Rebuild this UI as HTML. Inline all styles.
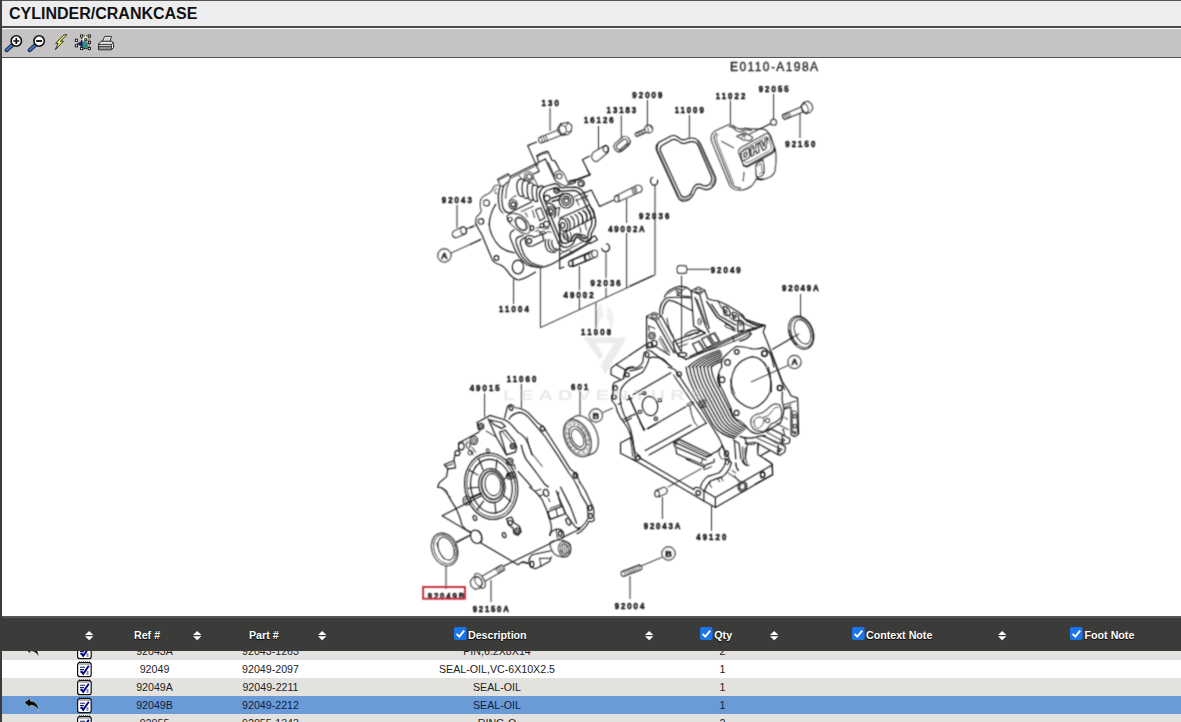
<!DOCTYPE html>
<html><head><meta charset="utf-8">
<style>
html,body{margin:0;padding:0;background:#fff;overflow:hidden}
body{width:1181px;height:722px;position:relative;font-family:"Liberation Sans",sans-serif}
#lb{position:absolute;left:0;top:0;width:2px;height:722px;background:#3b3b3b}
#hd{position:absolute;left:2px;top:0;width:1179px;height:28px;background:#ededed;border-top:1px solid #555;border-bottom:2px solid #4a4a4a;box-sizing:border-box}
#hd span{position:absolute;left:7px;top:4px;font-weight:bold;font-size:16px;color:#111;white-space:nowrap}
#tb{position:absolute;left:2px;top:29px;width:1179px;height:29px;background:#c5c3c4;border-bottom:1px solid #555;box-sizing:border-box}
#dg{position:absolute;left:0;top:0;width:1181px;height:722px;will-change:transform;opacity:0.999}
#th{position:absolute;left:2px;top:616px;width:1179px;height:35px;background:#3b3b39;border-top:2px solid #555;box-sizing:border-box}
.r{position:absolute;left:2px;width:1179px;height:18px}
.t{position:absolute;font-size:10.67px;color:#222;white-space:nowrap;transform:translateX(-50%);line-height:18px}
.h{position:absolute;font-size:10.67px;font-weight:bold;color:#fff;white-space:nowrap;top:627.8px;line-height:14px;text-shadow:0 1px 1px #000}
</style></head><body>
<svg width="0" height="0" style="position:absolute"><defs>
<g id="note"><rect x="0.6" y="1.6" width="13.6" height="14" rx="2.2" fill="#fff" stroke="#111" stroke-width="1.2"/>
<path d="M2 1.2h11" stroke="#111" stroke-width="1.4" stroke-dasharray="1.1 0.9"/>
<path d="M2 3.2h11" stroke="#777" stroke-width="0.8"/>
<path d="M3 6.2h5M3 8.6h4M3 11h2.5M9.5 11h2M9.5 13h2" stroke="#1a1a6a" stroke-width="1.1"/>
<path d="M4.2 10.2l2 2.6l5.6-8" stroke="#00008b" stroke-width="1.9" fill="none"/></g>
<g id="arr"><path d="M0.3 4.6L6.4 0.2L6.2 3.1C10.5 3.2 14.6 6 14.6 13.2C13.2 9 10.5 7.4 6.1 7.3L6.4 9.6Z" fill="#0a0a0a" stroke="rgba(255,255,255,.45)" stroke-width="0.8"/></g>
<g id="sort"><path d="M0 3.9L4.2 0L8.4 3.9ZM0 5.3L4.2 9.2L8.4 5.3Z" fill="#fff"/></g>
<g id="chk"><rect x="0" y="0" width="12.6" height="13" rx="2" fill="#1b74e8"/><path d="M2.6 6.8l2.7 2.8l4.9-6" stroke="#fff" stroke-width="1.9" fill="none"/></g>
</defs></svg>
<div id="lb"></div>
<div id="hd"><span>CYLINDER/CRANKCASE</span></div>
<div id="tb"></div>
<svg style="position:absolute;left:0;top:28px" width="130" height="30" viewBox="0 28 130 30">
<!-- zoom in -->
<path d="M12.2 45.2L6.6 50.2" stroke="#1c2a44" stroke-width="4" stroke-linecap="round"/>
<path d="M12.2 45.2L6.8 50" stroke="#3f78cf" stroke-width="2" stroke-linecap="round"/>
<circle cx="16.3" cy="41" r="5.2" fill="#fff" stroke="#111" stroke-width="1.6"/>
<path d="M13.3 41h6M16.3 38v6" stroke="#111" stroke-width="1.7"/>
<!-- zoom out -->
<path d="M35 45.2L29.6 50.2" stroke="#1c2a44" stroke-width="4" stroke-linecap="round"/>
<path d="M35 45.2L29.8 50" stroke="#3f78cf" stroke-width="2" stroke-linecap="round"/>
<circle cx="39.1" cy="41" r="5.2" fill="#fff" stroke="#111" stroke-width="1.6"/>
<path d="M36.2 41h5.8" stroke="#111" stroke-width="1.9"/>
<!-- lightning -->
<path d="M64 34.8L66.9 34.8L60.4 41.2L63.4 41.2L55.3 49.8L58.2 43.2L55.6 43.2Z" fill="#eef06a" stroke="#22221a" stroke-width="0.9" stroke-linejoin="round"/>
<!-- select -->
<circle cx="84.2" cy="45.4" r="3.9" fill="#2f8d86"/>
<circle cx="85.3" cy="38.4" r="2.6" fill="#f2f1b8"/>
<path d="M76.5 43.8L82.5 40.6L82.5 47Z" fill="#26265e"/>
<rect x="81.6" y="35.9" width="7.6" height="12.6" fill="none" stroke="#111" stroke-width="0.9" stroke-dasharray="1.2 1"/>
<g fill="#fff" stroke="#111" stroke-width="0.9"><rect x="80.6" y="34.9" width="2.2" height="2.2"/><rect x="88.2" y="34.9" width="2.2" height="2.2"/><rect x="80.6" y="47.4" width="2.2" height="2.2"/><rect x="88.2" y="47.4" width="2.2" height="2.2"/><rect x="75.3" y="39.2" width="2.2" height="2.2"/><rect x="75.3" y="44.7" width="2.2" height="2.2"/><rect x="88.4" y="41.2" width="2.2" height="2.2"/><rect x="84.8" y="38.8" width="2" height="2"/></g>
<!-- printer -->
<path d="M102.6 41.6L104.6 36.4L111.6 36.4L109.8 41.6Z" fill="#fff" stroke="#222" stroke-width="0.9"/>
<path d="M105 38.2h5M104.4 39.8h5" stroke="#999" stroke-width="0.7"/>
<path d="M98.6 44L101.2 41.2L111.6 41.2L113.6 43.6L113.6 47.4L111.4 49.8L98.6 49.8Z" fill="#e9e9e9" stroke="#222" stroke-width="1"/>
<path d="M98.6 44.4L111.4 44.4L113.4 42.4M98.8 46.4h12.4M98.8 48h12.4M111.4 44.4v5.2" stroke="#222" stroke-width="0.9" fill="none"/>
</svg>

<svg id="dg" viewBox="0 0 1181 722">
<defs><filter id="bl" x="0" y="0" width="1181" height="722" filterUnits="userSpaceOnUse"><feConvolveMatrix order="3" kernelMatrix="0.05 0.11 0.05 0.11 0.36 0.11 0.05 0.11 0.05" edgeMode="none" preserveAlpha="false"/></filter></defs>
<g filter="url(#bl)">
<!-- 05_watermark.svg -->
<g fill="#ececec" stroke="none">
<path d="M583.5 337.5 L626.5 337.5 L605.5 374.5 L600.5 366 L614 343 L596 343 L603 355 L600 360.5 Z"/>
<path d="M599 331 Q588 318 602 301.5 Q600 312 606 318 Q608 310 606.5 305 Q620 318 609 331 Q612 322 604 316 Q597 322 599 331Z" fill="#f0f0f0"/>
<text transform="translate(503 400.2) scale(1.4 1)" font-family="Liberation Sans" font-weight="bold" font-size="14.2" textLength="142.8" lengthAdjust="spacing" fill="#eaeaea">LEADVENTURE</text>
</g>

<!-- 20_cover.svg -->
<g transform="translate(640,110) scale(0.127443)" fill="none" stroke="#161616" stroke-width="9.03" stroke-linejoin="round" stroke-linecap="round">
<!-- gasket 11009 -->
<path d="M150 253 L243 204 Q268 194 292 210 L322 230 Q345 240 372 226 Q420 210 452 236 Q468 250 478 272 L590 522 Q606 565 566 606 Q530 636 492 618 Q462 600 442 618 Q428 640 420 662 Q396 712 344 716 Q312 712 298 684 L132 322 Q116 280 150 253Z"/>
<path d="M176 276 L252 234 Q272 226 290 238 L322 258 Q348 270 376 254 Q416 240 440 258 Q452 268 460 286 L560 520 Q570 556 544 584 Q520 602 496 592 Q462 574 436 588 Q416 604 408 636 Q392 676 348 686 Q328 684 318 664 L160 322 Q152 292 176 276Z"/>
<path d="M140 270 Q128 290 142 322 L304 676 Q318 702 346 704 Q386 698 404 660" stroke-width="6.10"/>
<path d="M452 246 L580 524 Q590 560 560 594" stroke-width="6.10"/>
<!-- valve cover 11022 -->
<path d="M590 164 L690 118 Q716 110 738 128 Q760 150 796 150 Q830 138 868 150 L960 150 Q996 156 1010 184 L1052 290 Q1070 330 1066 400 L1060 470 Q1052 512 1010 530 L960 546 Q930 548 912 540 Q902 566 880 590 Q840 624 790 628 Q730 630 704 590 L562 244 Q546 196 590 164Z" fill="#fff"/>
<path d="M600 182 Q572 206 586 244 L720 580 Q744 612 790 612" />
<path d="M612 190 Q590 214 604 248 L736 578" stroke-width="5.49"/>
<path d="M640 246 L734 296"/>
<path d="M700 130 Q730 128 752 160 Q770 176 800 168"/>
<path d="M800 168 Q830 150 872 162"/>
<!-- small plate on top -->
<path d="M758 206 L822 176 L884 214 Q880 236 850 240 L812 236Z"/>
<path d="M790 200 L830 190 M800 214 L836 196 M812 190 L826 224" stroke-width="5.49"/>
<!-- OHV plate -->
<path d="M772 332 Q770 306 800 290 L986 186 Q1012 176 1024 204 L1050 286 Q1056 316 1030 332 L852 432 Q820 446 806 420Z"/>
<path d="M790 336 Q790 318 812 306 L980 212 Q1002 204 1010 226 L1030 290 Q1034 308 1014 320 L850 410 Q826 420 816 400Z" stroke-width="5.49"/>
<path d="M806 420 Q812 450 846 446 L1040 340 Q1062 322 1058 300" />
<g transform="matrix(1,-0.53,0.1,1,800,404)" fill="#fff" stroke="#161616" stroke-width="9.76"><path d="M8 0H54Q62 0 62 -8V-66Q62 -74 54 -74H8Q0 -74 0 -66V-8Q0 0 8 0ZM21 -22V-52H41V-22Z"/><path d="M74 0V-74H94V-47H114V-74H134V0H114V-27H94V0Z"/><path d="M144 -74H164L176 -26L188 -74H208L187 0H165Z"/></g>
<!-- lower boss -->
<path d="M906 446 Q912 420 940 404 L966 392 L976 470 Q978 500 956 516 Q930 530 912 518Z"/>
<path d="M922 440 L950 420 L958 480 M934 500 Q950 486 972 490" stroke-width="5.49"/>
<path d="M912 518 Q920 544 960 540"/>
<path d="M816 490 L810 556"/>
<!-- oring 92055 and leader -->
<circle cx="1048" cy="97" r="23" fill="#fff"/>
<path d="M1024 108 L852 192"/>
<!-- ring 92036 -->
</g>

<!-- 30_headA.svg -->
<g transform="translate(470,150) scale(0.10248)" fill="none" stroke="#161616" stroke-width="10.98" stroke-linejoin="round" stroke-linecap="round">
<!-- flange / gasket face left -->
<path d="M272 345 Q240 340 226 372 Q214 410 170 432 Q112 452 102 500 Q96 560 112 596 Q96 630 66 652 Q50 680 56 730" fill="#fff"/>
<path d="M262 372 Q240 380 238 404 Q240 430 262 424" stroke-width="8.54"/>
<circle cx="160" cy="516" r="29"/>
<circle cx="106" cy="697" r="27"/>
<path d="M252 528 Q196 610 186 730"/>
<!-- left tab -->
<path d="M270 286 L372 232 L394 262 L382 300 Q350 320 330 350 L296 348Z" fill="#fff"/>
<path d="M276 298 L378 246" stroke-width="8.54"/>
<!-- big side arcs -->
<path d="M296 346 Q262 440 286 560 Q296 600 322 616"/>
<path d="M330 344 Q298 440 318 548 Q328 590 352 604"/>
<path d="M382 300 Q344 380 348 470" stroke-width="8.54"/>
<!-- long top edge -->
<path d="M392 258 L735 88"/>
<path d="M398 276 L668 140" stroke-width="8.54"/>
<!-- tower -->
<path d="M652 56 Q690 26 742 14 Q760 12 764 22 L800 100 L828 106 L878 198" />
<path d="M656 64 Q700 36 756 26" stroke-width="8.54"/>
<path d="M654 58 L668 110"/>
<path d="M735 88 L832 292"/>
<path d="M764 120 L822 250" stroke-width="8.54"/>
<path d="M480 250 L500 280 M610 250 L660 345" stroke-width="8.54"/>
<!-- bosses -->
<ellipse cx="575" cy="258" rx="42" ry="46" fill="#fff"/>
<circle cx="577" cy="260" r="24"/>
<path d="M832 222 Q850 196 886 204 Q910 214 924 250 L962 338 L930 352 Q870 330 836 300 Q818 262 832 222Z" fill="#fff"/>
<circle cx="872" cy="256" r="25"/>
<path d="M966 304 L1018 290 L1030 318 L978 336Z"/>
<circle cx="1086" cy="326" r="29"/>
<path d="M1076 318 Q1096 300 1104 328 Q1100 350 1086 356" stroke-width="8.54"/>
<path d="M1030 300 L1171 240" stroke-width="8.54"/>
<!-- spring coils left -->
<path d="M470 296 Q440 360 478 440 Q500 460 520 448"/>
<path d="M476 292 Q510 268 540 300"/>
<path d="M518 306 Q492 380 528 462 Q548 480 566 466"/>
<path d="M522 304 Q556 286 586 322"/>
<path d="M566 326 Q544 396 576 480 Q594 498 612 486"/>
<path d="M570 324 Q604 310 630 344"/>
<path d="M612 346 Q594 414 622 492 Q640 510 654 500"/>
<path d="M616 346 Q650 336 672 368"/>
<path d="M656 370 Q640 430 660 500"/>
<path d="M660 366 Q690 340 716 356"/>
<!-- hole lower-left on head -->
<ellipse cx="420" cy="530" rx="40" ry="44"/>
<circle cx="422" cy="532" r="23"/>
<path d="M384 496 Q410 456 452 444" stroke-width="8.54"/>
<path d="M356 604 L384 616 Q470 570 600 508"/>
<!-- rocker-cover seat (double outline) -->
<!-- center details -->
<circle cx="846" cy="396" r="27"/>
<circle cx="846" cy="396" r="12" stroke-width="8.54"/>
<circle cx="752" cy="472" r="29"/>
<circle cx="940" cy="496" r="70"/>
<circle cx="940" cy="496" r="44"/>
<circle cx="940" cy="496" r="24"/>
<path d="M790 470 L880 440 M800 500 L870 480 M880 440 L900 420" stroke-width="8.54"/>
<circle cx="790" cy="596" r="42"/>
<circle cx="790" cy="596" r="22"/>
<path d="M740 520 Q800 510 830 560 Q850 620 820 660"/>
<!-- port flange lower-left -->
<path d="M500 600 L620 548 M540 610 L560 650 M610 590 L630 660" stroke-width="8.54"/>
<!-- right spring coils -->
<!-- exhaust port flange -->
<path d="M362 648 Q376 616 420 618 L480 630 Q540 660 574 722 Q598 780 576 806 Q548 828 500 806 Q440 770 400 722 Q364 690 362 648Z" fill="#fff"/>
<ellipse cx="498" cy="722" rx="46" ry="76" transform="rotate(-38 498 722)"/>
<ellipse cx="498" cy="722" rx="37" ry="66" transform="rotate(-38 498 722)" stroke-width="7.32"/>
<circle cx="392" cy="676" r="20"/>
</g>

<!-- 31_headB.svg -->
<g transform="translate(470,224) scale(0.10248)" fill="none" stroke="#161616" stroke-width="10.98" stroke-linejoin="round" stroke-linecap="round">
<!-- flange outer -->
<path d="M58 0 Q80 50 112 96 L212 336 Q222 372 270 390 Q330 404 372 470 Q410 530 470 546 Q520 544 640 468"/>
<circle cx="258" cy="331" r="23"/>
<ellipse cx="468" cy="420" rx="55" ry="68"/>
<path d="M0 200 L105 150 M0 40 L40 20"/>
<!-- bore arc -->
<path d="M186 0 Q200 130 290 220 Q350 270 436 280"/>
<!-- head lower body -->
<path d="M430 58 L404 76 Q384 96 394 140 L440 252 Q470 330 556 398 Q620 430 700 424 Q780 410 870 352 L1000 282 L1171 180"/>
<path d="M520 110 L470 128 Q440 140 452 190 L486 280 Q520 350 590 396 Q640 420 690 424" />
<path d="M540 130 L510 148 Q484 160 494 206 L520 282 Q548 340 610 384 Q660 410 710 412"/>
<!-- boss -->
<path d="M540 150 Q540 116 576 112 Q610 112 624 130 L706 100 L720 160 L612 214 Q560 226 544 190Z"/>
<circle cx="578" cy="166" r="23"/>
<!-- port flange bottom -->
<circle cx="602" cy="40" r="22"/>
<path d="M640 70 Q670 50 690 80 Q710 110 740 90 Q760 60 790 80" stroke-width="8.54"/>
<path d="M650 40 L700 30 M720 50 L770 40" stroke-width="8.54"/>
<!-- seat lower -->
<!-- spring coils -->
<path d="M740 150 Q720 210 760 262 Q790 282 830 276"/>
<path d="M770 150 Q752 200 790 250 Q816 268 850 262"/>
<path d="M800 160 Q790 200 820 240 Q846 254 880 244"/>
<path d="M900 90 L920 150 M940 80 L960 150 M980 80 L990 130" stroke-width="8.54"/>
<path d="M880 250 Q920 290 960 250 L1000 282" stroke-width="8.54"/>
<!-- vertical assembly line -->
<path d="M875 0 L875 436 L916 420"/>
<!-- pin 49002 -->
<path d="M984 356 L1171 282 M1004 412 L1171 346"/>
<ellipse cx="984" cy="385" rx="22" ry="29"/>
<path d="M1004 358 Q990 384 1004 412" stroke-width="8.54"/>
<path d="M1120 304 Q1108 330 1128 362"/>
</g>

<!-- 32_headC.svg -->
<g transform="translate(560,170) scale(0.10248)" fill="none" stroke="#161616" stroke-width="10.98" stroke-linejoin="round" stroke-linecap="round">
<!-- pin 49002A -->
<path d="M548 251 L748 152 Q790 140 800 180 Q800 212 776 218 L572 308" fill="#fff"/>
<ellipse cx="553" cy="280" rx="22" ry="30" fill="#fff"/>
<path d="M574 252 Q560 280 574 306" stroke-width="8.54"/>
<path d="M700 176 L740 158 L752 214 L716 232Z" fill="#999" stroke="#555" stroke-width="6.10"/>
<!-- leader pin->head -->
<path d="M520 296 L386 356 L306 196 L232 226"/>
<!-- ring 92036 upper -->
<path d="M950.8 97.6 A34 40 0 1 1 906.4 70.4"/>
<!-- head right sliver -->
</g>
<g transform="translate(560,230) scale(0.10248)" fill="none" stroke="#161616" stroke-width="10.98" stroke-linejoin="round" stroke-linecap="round">
<!-- pin 49002 right end -->
<path d="M100 300 L322 200 M122 358 L350 264"/>
<ellipse cx="338" cy="232" rx="28" ry="34" fill="#fff"/>
<path d="M246 238 Q236 268 262 296 M282 222 Q272 252 298 282" stroke-width="8.54"/>
<!-- head bottom right -->
<path d="M0 278 L250 142 L270 96 L340 56 L366 96 L296 132 L268 100"/>
<path d="M0 236 L230 110" stroke-width="8.54"/>
<path d="M40 20 Q30 70 80 110 Q140 120 160 60 Q200 30 250 60" />
<path d="M60 0 Q60 60 100 84 Q130 84 140 40" stroke-width="8.54"/>
<path d="M180 60 L220 90 L260 70" stroke-width="8.54"/>
<!-- ring 92036 lower -->
<path d="M451.6 134.6 A38 38 0 1 1 407.6 178.6"/>
</g>

<!-- 33_headE.svg -->
<g transform="translate(540,170) scale(0.10248)" fill="none" stroke="#161616" stroke-width="10.98" stroke-linejoin="round" stroke-linecap="round">
<path d="M460 0 L492 46 L300 120"/>
<!-- seat right -->
<!-- rocker shaft lines -->
<path d="M330 262 L440 214 M350 300 L470 250 M352 280 L380 344 M420 240 L450 300" stroke-width="8.54"/>
<path d="M190 470 L480 344"/>
<path d="M250 606 L530 462"/>
<!-- retainer -->
<ellipse cx="226" cy="536" rx="42" ry="62" transform="rotate(-12 226 536)"/>
<ellipse cx="222" cy="540" rx="20" ry="28"/>
<!-- coils -->
<path d="M262 470 Q306 500 290 586"/>
<path d="M300 452 Q346 480 332 566"/>
<path d="M340 434 Q386 460 374 546"/>
<path d="M378 416 Q428 440 416 524" stroke-width="14.64"/>
<path d="M420 398 Q468 420 456 502" stroke-width="14.64"/>
<path d="M458 380 Q504 400 494 482"/>
<path d="M490 362 Q536 390 528 462"/>
<!-- below springs -->
<path d="M196 600 Q190 660 214 722"/>
<path d="M440 516 L452 584 M390 560 L400 610 M260 640 L280 700" stroke-width="8.54"/>
</g>

<!-- 34_seat.svg -->
<g transform="translate(510,175) scale(0.10246)" fill="none" stroke="#161616" stroke-width="12.20" stroke-linejoin="round" stroke-linecap="round">
<path d="M300 150 Q310 120 350 110 L440 84 Q470 90 480 110 Q500 132 540 122 L640 118 Q700 130 730 190 L820 380 Q846 440 830 500 Q800 560 790 580 Q810 620 760 650 Q700 650 670 610 Q640 600 630 640 Q610 700 540 706 Q490 700 470 660 L290 220 Q280 180 300 150Z"/>
<path d="M340 170 Q350 150 380 144 L440 124 Q460 140 500 160 L620 150 Q680 160 700 210 L790 400 Q806 450 796 490 Q770 540 760 580 Q770 610 740 620 Q700 616 680 580 Q640 560 610 610 Q590 660 540 668 Q500 660 490 630 L330 230 Q322 190 340 170Z"/>
<path d="M250 340 L300 320 L340 420 L290 446Z" stroke-width="9.76"/>
<circle cx="356" cy="480" r="28" stroke-width="9.76"/>
<circle cx="312" cy="494" r="20" stroke-width="9.76"/>
<path d="M290 560 Q320 540 350 560 Q330 592 300 580Z" stroke-width="8.54"/>
<path d="M400 232 L500 200 L520 178 M410 262 L490 240" stroke-width="9.76"/>
<path d="M440 330 L484 318 L470 400" stroke-width="9.76"/>
</g>

<!-- 40_small1.svg -->
<g transform="translate(520,100) scale(0.127443)" fill="none" stroke="#161616" stroke-width="9.03" stroke-linejoin="round" stroke-linecap="round">
<!-- bolt 130 -->
<path d="M150 296 L300 236 L322 276 L166 338 Q136 322 150 296Z" fill="#fff"/>
<path d="M163 290 Q176 312 178 334 M181 283 Q194 305 196 327 M199 276 Q212 298 214 320" stroke-width="7.32"/>
<path d="M296 222 L320 186 L378 178 L406 200 L402 244 L376 270 L332 276 L302 256Z" fill="#fff"/>
<ellipse cx="336" cy="232" rx="27" ry="34" transform="rotate(-20 336 232)"/>
<path d="M320 186 L330 200 M378 178 L362 208 M402 244 L366 250" stroke-width="6.71"/>
<path d="M130 330 L60 358 L150 560 L110 578"/>
<!-- pin 16126 -->
<path d="M586 404 L662 360 Q690 352 694 384 Q696 404 688 412 L606 482 Q574 484 562 452 Q560 420 586 404Z" fill="#fff"/>
<ellipse cx="672" cy="385" rx="19" ry="25"/>
<path d="M545 440 L490 468 L548 585 L420 632"/>
<!-- ring 13183 -->
<g transform="rotate(-40 800 346)"><rect x="732" y="308" width="136" height="78" rx="32" fill="#fff"/><rect x="750" y="326" width="98" height="42" rx="18"/><path d="M740 372 Q800 392 860 372" stroke-width="6.71"/></g>
<!-- screw 92009 -->
<path d="M906 262 L986 226 L996 250 L918 286 Q900 280 906 262Z" fill="#fff"/>
<path d="M918 258 L928 280 M932 252 L942 274 M946 246 L956 268 M960 240 L970 262" stroke-width="6.71"/>
<circle cx="1010" cy="228" r="31" fill="#fff"/>
<path d="M996 206 Q1016 226 1006 254 M1020 204 L1030 222" stroke-width="6.71"/>
</g>
<g transform="translate(430,190) scale(0.10246)" fill="none" stroke="#161616" stroke-width="10.98" stroke-linejoin="round" stroke-linecap="round">
<path d="M234 400 L316 362 Q352 358 358 392 Q358 416 346 426 L260 464 Q226 468 218 436 Q216 412 234 400Z" fill="#fff"/>
<ellipse cx="326" cy="396" rx="27" ry="35" transform="rotate(-15 326 396)"/>
</g>

<!-- 41_bolts.svg -->
<g fill="none" stroke="#161616" stroke-width="1.16" stroke-linejoin="round" stroke-linecap="round">
<path d="M805.0 105.5L782.6 114.9Q782.2 117.8 784.6 119.5L807.0 110.1Z" fill="#fff"/><path d="M783.7 114.4L786.4 118.7" stroke-width="0.85"/><path d="M785.4 113.8L788.0 118.1" stroke-width="0.85"/><path d="M787.0 113.1L789.6 117.4" stroke-width="0.85"/><path d="M788.6 112.4L791.3 116.7" stroke-width="0.85"/><path d="M812.8 108.5L810.1 112.3L805.8 113.6L802.3 110.8L801.0 106.3L803.6 102.6L807.9 101.2L811.5 104.0Z" fill="#fff"/><ellipse cx="805.1" cy="108.2" rx="2.8" ry="4.5" transform="rotate(157 805.1 108.2)" stroke-width="0.92"/>
<path d="M478.8 584.7L504.4 570.1Q504.3 566.9 501.6 565.1L476.0 579.7Z" fill="#fff"/><path d="M503.4 570.7L499.8 566.1" stroke-width="0.85"/><path d="M501.9 571.6L498.3 566.9" stroke-width="0.85"/><path d="M500.4 572.4L496.8 567.8" stroke-width="0.85"/><path d="M498.8 573.3L495.3 568.7" stroke-width="0.85"/><ellipse cx="479.8" cy="580.8" rx="4.3" ry="8.0" transform="rotate(-30 479.8 580.8)" fill="#fff"/><path d="M482.6 583.9L479.8 587.9L475.3 589.3L471.5 586.4L470.2 581.6L473.0 577.7L477.5 576.3L481.2 579.2Z" fill="#fff"/><ellipse cx="478.4" cy="581.6" rx="3.0" ry="4.8" transform="rotate(-30 478.4 581.6)" stroke-width="0.92"/>
</g>

<!-- 42_stud.svg -->
<g fill="none" stroke="#161616" stroke-width="1.16" stroke-linejoin="round" stroke-linecap="round">
<path d="M623.2 576.5L641.5 569.5Q642.5 566.5 639.7 564.9L621.4 571.9Q620.4 574.9 623.2 576.5Z" fill="#fff"/><path d="M624.6 576.0Q625.0 573.2 623.6 571.0" stroke-width="0.85"/><path d="M626.7 575.2Q627.2 572.3 625.7 570.2" stroke-width="0.85"/><path d="M628.9 574.4Q629.3 571.5 627.9 569.4" stroke-width="0.85"/><path d="M631.0 573.5Q631.5 570.7 630.0 568.6" stroke-width="0.85"/><path d="M633.2 572.7Q633.6 569.9 632.1 567.8" stroke-width="0.85"/><path d="M635.3 571.9Q635.7 569.1 634.3 566.9" stroke-width="0.85"/><path d="M637.5 571.1Q637.9 568.2 636.4 566.1" stroke-width="0.85"/><path d="M639.6 570.2Q640.0 567.4 638.6 565.3" stroke-width="0.85"/>
</g>

<!-- 50_caseA.svg -->
<g transform="translate(630,275) scale(0.127443)" fill="none" stroke="#161616" stroke-width="9.03" stroke-linejoin="round" stroke-linecap="round">
<!-- dome -->
<path d="M270 172 Q296 110 380 90 Q440 86 478 122"/>
<path d="M300 150 Q330 112 390 104" stroke-width="6.71"/>
<path d="M365 110 L372 160 L470 170 M372 160 Q400 120 440 100" stroke-width="7.32"/>
<ellipse cx="392" cy="130" rx="14" ry="16" stroke-width="6.71"/>
<!-- tunnel opening -->
<path d="M234 304 Q230 220 282 182 Q330 168 480 180"/>
<path d="M256 304 Q256 236 300 200 Q340 196 400 236 L492 282" />
<path d="M290 340 Q300 430 340 480" stroke-width="7.32"/>
<!-- left post -->
<path d="M130 325 L190 294 L246 320 L200 356Z" fill="#fff"/>
<ellipse cx="190" cy="325" rx="22" ry="12"/>
<path d="M130 325 L130 576"/>
<path d="M200 356 L346 612"/>
<path d="M246 322 L398 596"/>
<path d="M222 344 L370 610" stroke-width="6.10"/>
<path d="M146 400 L196 420 M146 400 L150 440" stroke-width="7.32"/>
<circle cx="172" cy="476" r="25"/>
<circle cx="172" cy="476" r="12" stroke-width="6.71"/>
<circle cx="190" cy="536" r="22"/>
<circle cx="158" cy="548" r="19"/>
<path d="M236 480 L300 600 M250 500 L310 608 M228 500 L286 610" stroke-width="6.10"/>
<path d="M130 576 L200 560 L310 628"/>
<!-- top middle post -->
<path d="M480 126 L536 94 L586 120 L546 152Z" fill="#fff"/>
<ellipse cx="535" cy="124" rx="22" ry="12"/>
<path d="M480 126 L500 400 L548 430"/>
<path d="M546 152 L622 420"/>
<path d="M510 176 L590 392 L620 452"/>
<path d="M525 190 L600 388" stroke-width="6.71"/>
<ellipse cx="546" cy="366" rx="12" ry="26" stroke-width="7.32"/>
<!-- slope -->
<path d="M586 120 L610 186 Q650 200 690 204 L760 236 L850 290 L890 320 L900 346 L1000 384 L1052 394"/>
<path d="M600 206 L680 330 L790 400 L822 440"/>
<path d="M640 230 L700 320 L830 392"/>
<path d="M612 216 L690 338 L800 410" stroke-width="6.10"/>
<path d="M690 204 L720 260 L800 350" stroke-width="7.32"/>
<path d="M730 250 Q756 240 776 270 L790 310 Q770 330 740 310Z"/>
<circle cx="748" cy="284" r="11"/>
<path d="M802 294 Q830 286 848 314 L856 352 Q836 366 812 352Z"/>
<circle cx="822" cy="326" r="11"/>
<path d="M846 366 L870 356 L890 372 L894 430 L846 446Z"/>
<ellipse cx="868" cy="386" rx="9" ry="13" stroke-width="6.71"/>
<path d="M752 386 L822 416 Q832 430 818 436 L748 406 Q740 392 752 386Z" stroke-width="7.32"/>
<path d="M900 346 L1040 392 M910 362 L1000 396" stroke-width="6.10"/>
<!-- long edges -->
<path d="M440 662 L590 600 L800 502 L940 440 L1046 400"/>
<path d="M470 640 L810 482 L930 430 L1040 396"/>
<path d="M806 484 L816 520 M930 430 L940 456" stroke-width="7.32"/>
<path d="M590 600 Q700 570 816 520 Q880 500 944 456" stroke-width="7.32"/>
<!-- ledge and ribs -->
<path d="M340 522 L470 470 L560 440 L592 456 L480 502"/>
<path d="M430 472 Q470 430 540 432 Q570 436 580 450" />
<path d="M460 480 Q500 452 540 456" stroke-width="6.71"/>
<path d="M490 542 L540 520 L586 590 L532 616Z"/>
<path d="M560 502 L606 480 L652 550 L602 572Z"/>
<path d="M622 472 L662 456 L702 520 L662 536Z"/>
<path d="M540 520 L586 590 M606 480 L652 550 M662 456 L702 520" stroke-width="17.08" stroke="#555"/>
<path d="M340 522 L350 600 Q390 640 440 662"/>
<ellipse cx="410" cy="626" rx="35" ry="17"/>
<path d="M370 540 L470 500 M380 566 L450 540" stroke-width="6.71"/>
<!-- fins -->
<path d="M456 722 Q540 640 700 590"/>
<path d="M486 722 Q560 650 710 600"/>
<path d="M516 722 Q580 660 716 612"/>
<path d="M546 722 Q600 670 720 626"/>
<path d="M576 722 Q620 680 720 642"/>
<path d="M606 722 Q640 690 716 660"/>
<path d="M636 722 Q660 700 714 680"/>
<!-- head gasket face -->
<path d="M720 722 Q706 660 760 622 Q790 590 830 562 Q870 556 960 580 Q1010 584 1040 570 Q1084 580 1110 640 L1130 722"/>
<path d="M830 722 Q870 660 960 640 Q1040 650 1072 722"/>
<circle cx="838" cy="603" r="18"/>
<circle cx="1055" cy="616" r="22"/>
<circle cx="765" cy="686" r="22"/>
<!-- left bottom flange -->
<path d="M113 610 Q130 584 164 596 L330 722"/>
<ellipse cx="134" cy="626" rx="14" ry="18"/>
<path d="M152 648 Q200 640 240 652 Q276 664 300 704"/>
<path d="M0 628 L122 547 M0 86 L176 6"/>
</g>

<!-- 51_caseB.svg -->
<g transform="translate(630,367) scale(0.127443)" fill="none" stroke="#161616" stroke-width="9.03" stroke-linejoin="round" stroke-linecap="round">
<!-- fins -->
<path d="M440 0 Q450 90 520 220 L650 450 Q700 530 820 560"/>
<path d="M468 0 Q478 90 546 214 L672 440 Q720 516 834 548"/>
<path d="M496 0 Q506 90 572 208 L694 430 Q740 502 848 536"/>
<path d="M524 0 Q534 90 598 202 L716 420 Q760 490 862 524"/>
<path d="M552 0 Q562 90 624 196 L738 410 Q780 478 876 512"/>
<path d="M580 0 Q590 90 650 190 L760 400 Q800 466 890 500"/>
<path d="M608 0 Q618 90 676 184 L782 390 Q820 454 904 488"/>
<path d="M636 0 Q646 90 700 176 L800 372 Q836 440 916 474"/>
<!-- left diagonal edge -->
<path d="M300 0 L352 20 L560 330 L620 430 L700 560 L760 690 L780 722"/>
<path d="M340 62 L592 430" stroke-width="7.32"/>
<path d="M356 84 L600 444" stroke-width="6.10"/>
<circle cx="385" cy="55" r="18"/>
<path d="M544 266 L588 258 L596 312 L552 322Z M556 270 L564 318 M572 266 L580 314" stroke-width="6.10"/>
<!-- gasket face -->
<path d="M720 0 Q690 40 690 90 Q700 140 730 190 L790 320 Q796 384 832 410 Q880 426 916 474 Q950 520 1000 524 Q1060 520 1177 440"/>
<path d="M700 60 Q680 100 706 150" stroke-width="13.42"/>
<path d="M790 330 Q796 380 820 400" stroke-width="13.42"/>
<circle cx="722" cy="100" r="22"/>
<circle cx="836" cy="360" r="20"/>
<path d="M828 0 Q776 100 800 200 Q850 300 960 326 Q1050 300 1098 200 Q1116 100 1084 0"/>
<path d="M790 100 Q800 170 820 210" stroke-width="7.32"/>
<circle cx="1177" cy="165" r="20"/>
<!-- left panel -->
<path d="M25 216 L320 46 M135 486 L440 310 M120 656 L480 456 M150 690 L600 440"/>
<ellipse cx="157" cy="306" rx="60" ry="76" transform="rotate(-12 157 306)"/>
<circle cx="113" cy="205" r="12"/><circle cx="235" cy="260" r="13"/><circle cx="78" cy="352" r="13"/><circle cx="203" cy="406" r="13"/>
<path d="M0 250 L110 496" stroke-width="10.98"/>
<path d="M0 386 L40 370 M76 216 L100 210"/>
<path d="M450 292 L490 270 L500 286 L458 306Z" stroke-width="7.32"/>
<path d="M470 306 Q480 380 500 420 Q510 450 530 462" stroke-width="7.32"/>
<path d="M0 30 Q60 24 100 0"/>
<!-- filter mount -->
<path d="M344 588 L392 570 L640 690 L600 706Z"/>
<path d="M344 588 L350 624 L596 730 M360 640 L366 680 L470 726" />
<path d="M392 590 L610 694" stroke-width="6.71"/>
<circle cx="362" cy="600" r="10" stroke-width="6.10"/>
<path d="M600 706 L700 652 L720 620"/>
<!-- bottom right -->
<path d="M810 572 L856 600 L870 722 M900 560 L920 604 L904 722 M820 590 L830 722" />
<path d="M1000 560 L1177 640 M1100 482 L1177 520 M1040 540 L1177 600" stroke-width="7.32"/>
<path d="M920 600 Q980 580 1010 600 L1000 660" stroke-width="7.32"/>
<path d="M720 620 Q740 660 760 690 M700 640 Q690 690 720 722" stroke-width="7.32"/>
<ellipse cx="757" cy="680" rx="16" ry="22"/>
<path d="M0 520 Q30 600 40 722"/>
<path d="M60 700 Q80 690 90 722" stroke-width="7.32"/>
</g>

<!-- 52_caseC.svg -->
<g transform="translate(630,459) scale(0.127443)" fill="none" stroke="#161616" stroke-width="9.03" stroke-linejoin="round" stroke-linecap="round">
<!-- base block -->
<path d="M20 0 L580 330 L670 380 L1120 122 L1116 40 L1060 0"/>
<path d="M92 0 L500 240"/>
<path d="M580 250 L580 330 M670 302 L670 380"/>
<path d="M580 250 L670 302 L1112 50"/>
<path d="M600 0 L1177 0" stroke="none"/>
<ellipse cx="1040" cy="125" rx="17" ry="22"/>
<ellipse cx="882" cy="216" rx="34" ry="40" transform="rotate(20 882 216)"/>
<ellipse cx="882" cy="216" rx="22" ry="27" transform="rotate(20 882 216)" stroke-width="13.42" stroke="#555"/>
<path d="M820 130 L856 180" stroke-width="7.32"/>
<!-- tab with hole -->
<path d="M500 240 Q500 222 526 222 Q560 230 580 250"/>
<circle cx="535" cy="266" r="18"/>
<!-- cradle band -->
<path d="M752 0 Q750 60 700 108 Q650 124 610 136 Q566 170 552 222"/>
<path d="M796 30 Q780 96 724 140 Q670 156 636 170 Q600 200 584 250"/>
<path d="M732 0 Q770 -10 796 30" />
<ellipse cx="762" cy="26" rx="14" ry="18" stroke-width="7.32"/>
<path d="M624 176 Q620 200 640 224 M690 150 Q690 166 704 180 M716 142 Q716 158 730 172" stroke-width="7.32"/>
<path d="M770 110 L860 170 M800 90 L830 110" stroke-width="7.32"/>
<path d="M830 30 Q830 70 850 90 M880 10 Q890 40 920 50" stroke-width="9.76"/>
<!-- top stuff -->
<path d="M440 0 L580 62 L600 44 L660 24 L660 0"/>
<path d="M470 0 L590 50 M560 30 L570 0" stroke-width="7.32"/>
<path d="M580 62 L580 84 L640 60" stroke-width="7.32"/>
<!-- pin 92043A -->
<path d="M204 248 L266 222 Q292 226 290 250 Q290 264 284 270 L226 296" fill="#fff"/>
<ellipse cx="213" cy="272" rx="18" ry="24" fill="#fff"/>
</g>

<!-- 53_caseR1.svg -->
<g transform="translate(740,300) scale(0.127443)" fill="none" stroke="#161616" stroke-width="9.03" stroke-linejoin="round" stroke-linecap="round">
<!-- seal 92049A -->
<g transform="rotate(-22 480 256)">
<ellipse cx="480" cy="256" rx="92" ry="134" fill="#fff"/>
<ellipse cx="484" cy="256" rx="80" ry="122" stroke-width="7.32"/>
<ellipse cx="492" cy="254" rx="58" ry="100"/>
<path d="M400 190 Q388 260 412 330" stroke-width="7.32"/>
</g>
<path d="M460 266 L256 386"/>
<!-- crankcase right edge -->
<path d="M176 196 L200 200 L182 250 L250 420 L332 640 L386 722"/>
<path d="M236 400 L350 704" stroke-width="7.32"/>
<circle cx="192" cy="420" r="22"/>
<circle cx="312" cy="690" r="20"/>
<path d="M210 536 Q250 610 246 722"/>
<path d="M0 112 Q30 150 100 190 Q150 214 190 196"/>
<path d="M0 172 L120 222 M0 252 L130 226" stroke-width="7.32"/>
<path d="M0 322 Q60 310 90 262" stroke-width="9.76"/>
</g>

<!-- 54_caseR2.svg -->
<g transform="translate(740,392) scale(0.127443)" fill="none" stroke="#161616" stroke-width="9.03" stroke-linejoin="round" stroke-linecap="round">
<path d="M314 244 Q336 216 346 130 Q330 90 330 50 L332 0"/>
<path d="M386 0 L400 30 L452 48 L456 150 L460 330 L430 350 L400 336 L400 120 L346 132"/>
<path d="M346 100 L440 70 M352 120 L400 100 M350 200 L372 214" stroke-width="7.32"/>
<path d="M412 150 Q440 140 448 170 L450 320 Q430 340 412 320Z" stroke-width="7.32"/>
<circle cx="430" cy="190" r="14" stroke-width="10.98" stroke="#444"/>
<circle cx="430" cy="268" r="14" stroke-width="10.98" stroke="#444"/>
<circle cx="426" cy="316" r="9" stroke-width="7.32"/>
<!-- slabs -->
<path d="M314 324 L392 366 L388 400 L350 410 L314 392"/>
<path d="M314 404 L356 430 L352 470 L314 496 L300 492"/>
<path d="M314 444 L330 452 M330 340 L334 400 M300 420 L300 492 L140 404" />
<path d="M240 290 L314 324 M290 250 L380 296 M330 300 L340 290 L350 340" stroke-width="7.32"/>
<circle cx="338" cy="378" r="11" stroke-width="7.32"/>
<circle cx="304" cy="462" r="11" stroke-width="7.32"/>
<circle cx="222" cy="298" r="9" stroke-width="7.32"/>
<path d="M200 310 L320 376 M180 340 L300 410" stroke-width="7.32"/>
<!-- block corner -->
<path d="M140 404 L140 490 L250 560 L256 650 L120 722"/>
<path d="M160 500 L230 462"/>
<ellipse cx="178" cy="648" rx="17" ry="22"/>
<path d="M20 430 Q20 540 40 566 Q56 580 72 576 M40 440 Q36 520 56 560" stroke-width="7.32"/>
<path d="M0 350 Q60 370 120 356 Q160 340 200 344" stroke-width="9.76"/>
<path d="M40 400 Q80 420 120 404" stroke-width="9.76"/>
</g>

<!-- 55_caseL1.svg -->
<g transform="translate(560,330) scale(0.127443)" fill="none" stroke="#161616" stroke-width="9.03" stroke-linejoin="round" stroke-linecap="round">
<!-- flange outline -->
<path d="M662 178 Q652 210 650 250 Q630 290 590 300 Q560 286 524 312 Q500 336 500 380 Q470 396 424 414 Q404 450 420 490 Q396 520 410 560 Q440 580 450 640 Q470 690 500 722"/>
<path d="M700 216 Q694 260 650 330 L560 380 Q500 420 476 470 Q466 540 480 600 Q496 660 530 722"/>
<circle cx="527" cy="352" r="16"/>
<ellipse cx="435" cy="456" rx="15" ry="19"/>
<circle cx="426" cy="526" r="16"/>
<!-- left box -->
<path d="M549 197 L440 270 L400 300 L400 350 L470 386"/>
<path d="M440 270 L510 312 Q540 284 580 290" />
<path d="M510 312 L500 380" stroke-width="7.32"/>
<!-- ticks/arrows -->
<path d="M540 516 L552 546" stroke-width="10.98"/>
<path d="M524 548 L566 534 M456 582 L480 574"/>
<path d="M500 700 L552 676 M510 716 L560 692"/>
</g>

<!-- 56_caseL2.svg -->
<g transform="translate(560,422) scale(0.127443)" fill="none" stroke="#161616" stroke-width="9.03" stroke-linejoin="round" stroke-linecap="round">
<path d="M500 0 Q530 40 549 88"/>
<path d="M530 0 Q560 60 572 140 Q576 200 590 240 Q610 250 640 292"/>
<path d="M475 165 L552 124 M475 165 L475 246 L560 288 L600 310"/>
<path d="M552 124 Q566 200 570 270" stroke-width="7.32"/>
<ellipse cx="611" cy="280" rx="15" ry="19"/>
<path d="M626 0 L664 60 M690 50 L760 12" />
<!-- bearing 601 -->
<g transform="rotate(-25 138 126)">
<path d="M138 -29 L192 -36 A97 155 0 0 1 192 286 L138 281" fill="#fff"/>
<ellipse cx="138" cy="126" rx="97" ry="155" fill="#fff"/>
<ellipse cx="138" cy="126" rx="87" ry="142" stroke-width="4.5"/>
<ellipse cx="138" cy="126" rx="58" ry="98"/>
<ellipse cx="138" cy="126" rx="42" ry="74"/>
<ellipse cx="138" cy="126" rx="72" ry="119" stroke-width="17" stroke-dasharray="22 14" stroke="#333" stroke-linecap="butt"/>
<ellipse cx="138" cy="126" rx="72" ry="119" stroke-width="9" stroke-dasharray="22 14" stroke="#fff" stroke-linecap="butt"/>
</g>
</g>

<!-- 57_peanut.svg -->
<g transform="translate(680,392) scale(0.127443)" fill="none" stroke="#161616" stroke-width="9" stroke-linejoin="round" stroke-linecap="round">
<path d="M556 236 Q552 196 600 176 Q650 170 690 130 Q730 84 776 98 Q806 130 794 200 Q760 236 712 252 Q690 290 660 306 Q610 318 574 286 Q556 262 556 236Z" fill="#fff"/>
<path d="M580 234 Q580 206 620 196 Q656 196 660 228 Q650 270 612 288 Q584 280 580 234Z" stroke-width="7.5"/>
<path d="M654 198 Q700 190 722 150 Q742 114 770 118" stroke-width="7.5"/>
<circle cx="686" cy="224" r="17"/>
</g>

<!-- 60_coverA.svg -->
<g transform="translate(430,395) scale(0.127443)" fill="none" stroke="#161616" stroke-width="9.03" stroke-linejoin="round" stroke-linecap="round">
<!-- gasket 11060 upper -->
<path d="M586 182 L602 112 Q606 78 640 76 Q662 84 664 100 Q720 100 770 138 L850 222 Q900 250 916 290 L1000 420 L1100 580 Q1150 610 1177 690"/>
<path d="M620 190 Q640 148 700 136 Q740 140 770 172 L840 252 L900 322 L1000 470 L1090 612 Q1130 660 1160 722"/>
<ellipse cx="635" cy="104" rx="12" ry="18" transform="rotate(-20 635 104)"/>
<ellipse cx="883" cy="263" rx="15" ry="20" transform="rotate(-20 883 263)"/>
<ellipse cx="1140" cy="633" rx="15" ry="20" transform="rotate(-20 1140 633)"/>
<path d="M716 392 Q724 440 750 500 L830 604 L900 700 L930 722"/>
<path d="M760 330 Q770 400 800 460 L880 560" stroke-width="7.32"/>
<!-- cover top outline -->
<path d="M370 216 L470 160 L560 186 Q610 200 644 238 L690 292 Q740 316 770 380 Q790 430 800 470"/>
<path d="M370 216 L380 266 L392 282"/>
<circle cx="400" cy="246" r="22"/><circle cx="400" cy="246" r="11" stroke-width="7.32"/>
<path d="M226 376 L340 316 L384 290"/>
<ellipse cx="345" cy="356" rx="28" ry="32"/><ellipse cx="345" cy="356" rx="13" ry="16" stroke-width="7.32"/>
<ellipse cx="246" cy="402" rx="22" ry="28"/>
<ellipse cx="300" cy="392" rx="16" ry="26" stroke-width="7.32"/>
<circle cx="215" cy="456" r="20"/>
<circle cx="316" cy="452" r="18" stroke-width="7.32"/>
<path d="M226 376 L222 430 M300 420 L340 470 M330 410 L360 450" stroke-width="7.32"/>
<!-- jag left -->
<path d="M196 470 L186 516 L112 546 L140 580 L200 572 L190 516"/>
<path d="M140 580 L130 640 L72 690 L60 722"/>
<path d="M120 560 L180 540" stroke-width="7.32"/>
<!-- ribs -->
<path d="M470 196 L560 216 L592 246 L562 262 L500 232 Z"/>
<path d="M456 186 L520 330 L600 470"/>
<path d="M520 330 L440 282" stroke-width="7.32"/>
<path d="M546 290 L590 276 L660 360 L680 410 L672 446 L600 470 Z"/>
<path d="M570 292 L640 372" stroke-width="7.32"/>
<circle cx="650" cy="402" r="20"/><circle cx="650" cy="402" r="9" stroke-width="7.32"/>
<circle cx="626" cy="521" r="25"/><circle cx="626" cy="521" r="12" stroke-width="7.32"/>
<ellipse cx="455" cy="440" rx="10" ry="18" transform="rotate(-20 455 440)" stroke-width="7.32"/>
<path d="M660 548 L672 580 M640 556 L664 548" stroke-width="7.32"/>
<path d="M690 600 L800 722"/>
<!-- bearing boss ellipses -->
<g transform="rotate(-10 480 716)">
<ellipse cx="480" cy="716" rx="207" ry="262"/>
<ellipse cx="480" cy="716" rx="190" ry="244" stroke-width="6.71"/>
<ellipse cx="482" cy="716" rx="162" ry="212"/>
<ellipse cx="486" cy="712" rx="102" ry="134"/>
<ellipse cx="490" cy="710" rx="84" ry="112" stroke-width="15.86" stroke="#4a4a4a"/>
<ellipse cx="496" cy="706" rx="62" ry="88" stroke-width="7.32"/>
<path d="M330 560 L392 610 M300 700 L378 706 M340 880 L400 820 M480 930 L486 850 M610 860 L560 800 M640 640 L590 680 M560 520 L540 590 M420 480 L440 580" stroke-width="8.54"/>
</g>
<circle cx="626" cy="636" r="25"/><circle cx="626" cy="636" r="12" stroke-width="7.32"/>
<path d="M640 600 L670 620 L660 660" stroke-width="7.32"/>
</g>

<!-- 61_coverB.svg -->
<g transform="translate(430,487) scale(0.127443)" fill="none" stroke="#161616" stroke-width="9.03" stroke-linejoin="round" stroke-linecap="round">
<!-- left edge -->
<path d="M60 0 Q110 10 130 34 Q140 70 200 160 Q240 240 250 300 Q280 340 320 356"/>
<path d="M90 0 L130 52 L164 84" stroke-width="6.10"/>
<path d="M400 440 L690 610 L720 590 L770 600"/>
<path d="M95 226 L400 70 M95 226 L320 360"/>
<!-- seal 92049B -->
<g transform="rotate(-22 115 490)">
<ellipse cx="115" cy="490" rx="98" ry="132" fill="#fff"/>
<ellipse cx="118" cy="490" rx="84" ry="118" stroke-width="6.71"/>
<ellipse cx="128" cy="488" rx="58" ry="94"/>
<path d="M76 420 Q60 490 84 560" stroke-width="7.32"/>
</g>
<path d="M210 436 L320 376"/>
<!-- plug -->
<ellipse cx="362" cy="390" rx="42" ry="54" transform="rotate(-25 362 390)"/>
<path d="M380 342 Q410 360 408 420 Q404 440 392 440" stroke-width="7.32"/>
<ellipse cx="352" cy="243" rx="13" ry="20" transform="rotate(-20 352 243)"/>
<ellipse cx="582" cy="378" rx="13" ry="20" transform="rotate(-20 582 378)"/>
<ellipse cx="290" cy="106" rx="30" ry="35"/><ellipse cx="290" cy="106" rx="14" ry="17" stroke-width="7.32"/>
<path d="M320 86 L400 50" stroke-width="14.64"/>
<path d="M600 250 L640 236 L662 282 L702 310 L716 350 L690 380 L660 366 L650 320 L620 300Z"/>
<circle cx="630" cy="280" r="17"/>
<circle cx="686" cy="344" r="22"/><circle cx="686" cy="344" r="10" stroke-width="7.32"/>
<!-- right edge -->
<path d="M780 0 Q840 40 880 100 Q920 180 940 260 Q964 320 940 380"/>
<ellipse cx="910" cy="46" rx="20" ry="28" transform="rotate(-20 910 46)"/>
<path d="M830 30 L872 18 M850 70 L890 60 M930 90 L940 116" stroke-width="7.32"/>
<path d="M930 192 L1040 150 L1062 210 L950 252 Q926 226 930 192Z"/>
<path d="M986 168 L1002 228 M940 170 L1030 136" stroke-width="7.32"/>
<path d="M1010 40 Q1000 60 1010 90 L1030 150" stroke-width="7.32"/>
<!-- gasket right lower -->
<path d="M1177 -32 L1200 0" stroke="none"/>
<path d="M990 30 L1060 200 L1130 300 Q1150 332 1177 320"/>
<path d="M1024 0 L1100 150 L1150 284"/>
<ellipse cx="1086" cy="272" rx="16" ry="28" transform="rotate(-25 1086 272)" stroke-width="12.20" stroke="#444"/>
<!-- lower right boss -->
<path d="M940 380 Q940 350 990 332 Q1030 326 1046 356 Q1056 386 1040 402"/>
<ellipse cx="1022" cy="366" rx="13" ry="20"/>
<path d="M990 332 L1000 400" stroke-width="7.32"/>
<!-- drain plug -->
<path d="M940 440 Q960 420 1010 418 Q1070 416 1100 452 Q1112 500 1082 540 Q1040 560 990 534 Q950 510 940 440Z" fill="#fff"/>
<ellipse cx="1056" cy="486" rx="48" ry="58" transform="rotate(-15 1056 486)"/>
<ellipse cx="1056" cy="486" rx="32" ry="40" transform="rotate(-15 1056 486)"/>
<path d="M1040 460 L1040 512 M1056 456 L1056 516 M1072 460 L1072 512" stroke-width="7.32"/>
<!-- arm -->
<path d="M950 500 L800 532 Q770 560 778 600 Q790 640 830 640 L870 622 L940 582 L952 548"/>
<ellipse cx="800" cy="606" rx="15" ry="22"/>
<path d="M860 560 L870 620 M860 560 L940 560" stroke-width="7.32"/>
<path d="M720 590 Q740 580 770 600" />
<path d="M580 620 L1177 330"/>
</g>

<!-- 62_gasketG.svg -->
<g transform="translate(540,470) scale(0.10248)" fill="none" stroke="#161616" stroke-width="10.98" stroke-linejoin="round" stroke-linecap="round">
<path d="M392 124 L440 200 L500 330 Q522 360 526 400 Q518 450 530 490 Q510 510 480 500 Q450 560 400 600 L360 622"/>
<path d="M366 160 L400 240 L460 340 Q468 400 470 470 Q450 520 400 560 L366 576"/>
<ellipse cx="490" cy="370" rx="17" ry="25"/>
<ellipse cx="492" cy="448" rx="17" ry="25"/>
<ellipse cx="348" cy="50" rx="19" ry="28" transform="rotate(-20 348 50)"/>
</g>

<!-- 90_labels.svg -->
<g font-family="Liberation Sans" font-weight="bold" font-size="8.9" fill="#151515" stroke="#151515" stroke-width="0.5">
<text transform="translate(541.6 105.6) scale(0.875 1)" textLength="19.7" lengthAdjust="spacing">130</text>
<text transform="translate(606.6 113.0) scale(0.875 1)" textLength="33.7" lengthAdjust="spacing">13183</text>
<text transform="translate(584.0 123.3) scale(0.875 1)" textLength="33.8" lengthAdjust="spacing">16126</text>
<text transform="translate(632.3000000000001 98.0) scale(0.875 1)" textLength="34.3" lengthAdjust="spacing">92009</text>
<text transform="translate(674.7 112.6) scale(0.875 1)" textLength="33.2" lengthAdjust="spacing">11009</text>
<text transform="translate(715.7 98.6) scale(0.875 1)" textLength="33.8" lengthAdjust="spacing">11022</text>
<text transform="translate(758.7 92.0) scale(0.875 1)" textLength="34.2" lengthAdjust="spacing">92055</text>
<text transform="translate(785.2 147.3) scale(0.875 1)" textLength="34.4" lengthAdjust="spacing">92150</text>
<text transform="translate(441.7 203.0) scale(0.875 1)" textLength="34.5" lengthAdjust="spacing">92043</text>
<text transform="translate(608.2 231.6) scale(0.875 1)" textLength="41.7" lengthAdjust="spacing">49002A</text>
<text transform="translate(639.1 219.0) scale(0.875 1)" textLength="34.5" lengthAdjust="spacing">92036</text>
<text transform="translate(590.6 286.3) scale(0.875 1)" textLength="34.4" lengthAdjust="spacing">92036</text>
<text transform="translate(563.6 298.0) scale(0.875 1)" textLength="34.3" lengthAdjust="spacing">49002</text>
<text transform="translate(499.0 312.3) scale(0.875 1)" textLength="34.1" lengthAdjust="spacing">11004</text>
<text transform="translate(581.0 335.3) scale(0.875 1)" textLength="34.5" lengthAdjust="spacing">11008</text>
<text transform="translate(710.7 273.0) scale(0.875 1)" textLength="34.2" lengthAdjust="spacing">92049</text>
<text transform="translate(782.0 291.0) scale(0.875 1)" textLength="41.9" lengthAdjust="spacing">92049A</text>
<text transform="translate(506.7 382.0) scale(0.875 1)" textLength="33.8" lengthAdjust="spacing">11060</text>
<text transform="translate(469.7 391.0) scale(0.875 1)" textLength="34.3" lengthAdjust="spacing">49015</text>
<text transform="translate(571.0 389.6) scale(0.875 1)" textLength="19.8" lengthAdjust="spacing">601</text>
<text transform="translate(643.7 528.6) scale(0.875 1)" textLength="41.9" lengthAdjust="spacing">92043A</text>
<text transform="translate(696.2 540.0) scale(0.875 1)" textLength="34.4" lengthAdjust="spacing">49120</text>
<text transform="translate(614.7 608.5) scale(0.875 1)" textLength="33.8" lengthAdjust="spacing">92004</text>
<text transform="translate(472.7 612.0) scale(0.875 1)" textLength="41.3" lengthAdjust="spacing">92150A</text>
<text transform="translate(427.7 599.2) scale(0.875 1)" textLength="41.9" lengthAdjust="spacing">92049B</text>
</g>
<text x="730" y="71.2" textLength="88" lengthAdjust="spacing" font-family="Liberation Sans" font-size="12" fill="#1a1a1a" stroke="#1a1a1a" stroke-width="0.3">E0110-A198A</text>
<circle cx="444.4" cy="255.5" r="6.6" fill="#fff" stroke="#1c1c1c" stroke-width="1.15"/><text x="444.4" y="258.6" text-anchor="middle" font-family="Liberation Sans" font-weight="bold" font-size="9.2" fill="#000" stroke="#000" stroke-width="0.7">A</text>
<circle cx="794.5" cy="362" r="6.6" fill="#fff" stroke="#1c1c1c" stroke-width="1.15"/><text x="794.5" y="365.1" text-anchor="middle" font-family="Liberation Sans" font-weight="bold" font-size="9.2" fill="#000" stroke="#000" stroke-width="0.7">A</text>
<circle cx="595.9" cy="415.5" r="6.6" fill="#fff" stroke="#1c1c1c" stroke-width="1.15"/><text x="595.9" y="418.6" text-anchor="middle" font-family="Liberation Sans" font-weight="bold" font-size="9.2" fill="#000" stroke="#000" stroke-width="0.7">B</text>
<circle cx="668.5" cy="553.5" r="6.6" fill="#fff" stroke="#1c1c1c" stroke-width="1.15"/><text x="668.5" y="556.6" text-anchor="middle" font-family="Liberation Sans" font-weight="bold" font-size="9.2" fill="#000" stroke="#000" stroke-width="0.7">B</text>
<g stroke="#2a2a2a" stroke-width="1.0" fill="none">
<path d="M550.1 108L550.1 131"/><path d="M598.5 126L598.5 149"/><path d="M621.3 115.6L621.3 138"/><path d="M647.4 100L647.4 125"/><path d="M689.4 115L689.4 138"/><path d="M730.4 100.4L730.4 125"/><path d="M773.6 94L773.6 119"/><path d="M800 114L800 138"/><path d="M457 205L457 228"/><path d="M466 229L474 225.6"/><path d="M451 253L480 240"/><path d="M513.6 279L513.6 304"/><path d="M596 303L596 328"/><path d="M579.4 266L579.4 290"/><path d="M579.4 299L579.4 310"/><path d="M606 251L606 278"/><path d="M606 288L606 298"/><path d="M626.6 199L626.6 223"/><path d="M626.6 233L626.6 288"/><path d="M687 269.3L710 269.3"/><path d="M681.6 275.6L681.6 352.7"/><path d="M800.6 294L800.6 316.4"/><path d="M521.4 384L521.4 408"/><path d="M484.6 393.4L484.6 417"/><path d="M580 391.6L580 415"/><path d="M602.5 412.6L613 408"/><path d="M446 566L446 589"/><path d="M491 580L491 602"/><path d="M630 576L630 599"/><path d="M456 542L470 535"/><path d="M662.4 497L662.4 519"/><path d="M668 487L701.4 468.6"/><path d="M788.2 365.4L751 382"/><path d="M711.5 506L711.5 531"/><path d="M641 566L662.6 557"/><path d="M540.4 268L540.4 327.6L655 275L655 185"/>
</g>
<rect x="677.2" y="265.6" width="9.4" height="7.8" rx="2.6" fill="#fff" stroke="#1c1c1c" stroke-width="1.15"/>
<rect x="423.1" y="587" width="41.8" height="11.7" fill="none" stroke="#c62b3a" stroke-width="1.9"/>

</g>
</svg>
<div class="r" style="top:642px;background:#e4e2df"></div>
<div class="r" style="top:660px;background:#fff"></div>
<div class="r" style="top:678px;background:#e4e2df"></div>
<div class="r" style="top:696px;background:#6a9bd6"></div>
<div class="r" style="top:714px;background:#e4e2df"></div>
<div class="t" style="left:154.5px;top:642px;color:#222">92043A</div>
<div class="t" style="left:270.5px;top:642px;color:#222">92043-1263</div>
<div class="t" style="left:497px;top:642px;color:#222">PIN,6.2X8X14</div>
<div class="t" style="left:722.5px;top:642px;color:#222">2</div>
<div class="t" style="left:154.5px;top:660px;color:#222">92049</div>
<div class="t" style="left:270.5px;top:660px;color:#222">92049-2097</div>
<div class="t" style="left:497px;top:660px;color:#222">SEAL-OIL,VC-6X10X2.5</div>
<div class="t" style="left:722.5px;top:660px;color:#222">1</div>
<div class="t" style="left:154.5px;top:678px;color:#222">92049A</div>
<div class="t" style="left:270.5px;top:678px;color:#222">92049-2211</div>
<div class="t" style="left:497px;top:678px;color:#222">SEAL-OIL</div>
<div class="t" style="left:722.5px;top:678px;color:#222">1</div>
<div class="t" style="left:154.5px;top:696px;color:#0d1b3e">92049B</div>
<div class="t" style="left:270.5px;top:696px;color:#0d1b3e">92049-2212</div>
<div class="t" style="left:497px;top:696px;color:#0d1b3e">SEAL-OIL</div>
<div class="t" style="left:722.5px;top:696px;color:#0d1b3e">1</div>
<div class="t" style="left:154.5px;top:714px;color:#222">92055</div>
<div class="t" style="left:270.5px;top:714px;color:#222">92055-1343</div>
<div class="t" style="left:497px;top:714px;color:#222">RING-O</div>
<div class="t" style="left:722.5px;top:714px;color:#222">2</div>
<svg style="position:absolute;left:77.4px;top:642.6px" width="15" height="17"><use href="#note"/></svg>
<svg style="position:absolute;left:77.4px;top:660.6px" width="15" height="17"><use href="#note"/></svg>
<svg style="position:absolute;left:77.4px;top:678.6px" width="15" height="17"><use href="#note"/></svg>
<svg style="position:absolute;left:77.4px;top:696.6px" width="15" height="17"><use href="#note"/></svg>
<svg style="position:absolute;left:77.4px;top:714.6px" width="15" height="17"><use href="#note"/></svg>
<svg style="position:absolute;left:24px;top:643.8px" width="16" height="15"><use href="#arr"/></svg>
<svg style="position:absolute;left:24px;top:697.8px" width="16" height="15"><use href="#arr"/></svg>

<div id="th"></div>
<div class="h" style="left:134px">Ref #</div>
<div class="h" style="left:249px">Part #</div>
<div class="h" style="left:468px">Description</div>
<div class="h" style="left:714.3px">Qty</div>
<div class="h" style="left:866px">Context Note</div>
<div class="h" style="left:1084.6px">Foot Note</div>
<svg style="position:absolute;left:85.2px;top:630.7px" width="9" height="10"><use href="#sort"/></svg>
<svg style="position:absolute;left:193.4px;top:630.7px" width="9" height="10"><use href="#sort"/></svg>
<svg style="position:absolute;left:317.8px;top:630.7px" width="9" height="10"><use href="#sort"/></svg>
<svg style="position:absolute;left:645.1999999999999px;top:630.7px" width="9" height="10"><use href="#sort"/></svg>
<svg style="position:absolute;left:769.8px;top:630.7px" width="9" height="10"><use href="#sort"/></svg>
<svg style="position:absolute;left:997.8px;top:630.7px" width="9" height="10"><use href="#sort"/></svg>
<svg style="position:absolute;left:453.7px;top:626.7px" width="13" height="14"><use href="#chk"/></svg>
<svg style="position:absolute;left:700px;top:626.7px" width="13" height="14"><use href="#chk"/></svg>
<svg style="position:absolute;left:852px;top:626.7px" width="13" height="14"><use href="#chk"/></svg>
<svg style="position:absolute;left:1070.3px;top:626.7px" width="13" height="14"><use href="#chk"/></svg>

</body></html>
